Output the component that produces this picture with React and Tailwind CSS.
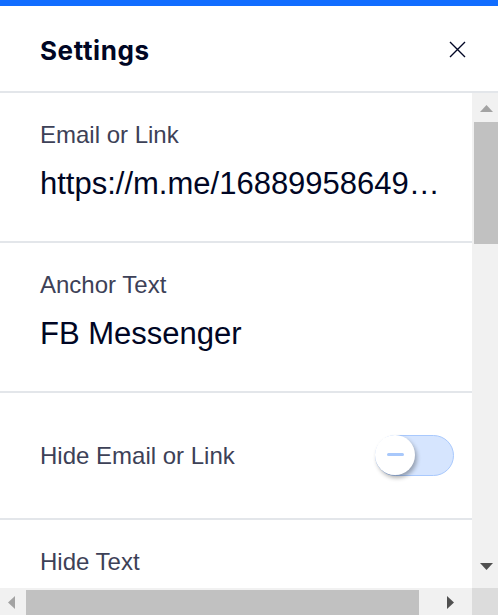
import React from "react";

function Section({ label, value }) {
  return (
    <div className="pl-10 pr-[28px] pt-[27px] pb-[39px] border-b-2 border-[#e3e6ea]">
      <div className="text-[24px] leading-[29px] text-[#3d4157]">{label}</div>
      <div className="mt-4 text-[31px] leading-[37px] text-[#000624] truncate">{value}</div>
    </div>
  );
}

function Toggle() {
  return (
    <div className="relative w-[79px] h-[41px] rounded-full bg-[#d6e5fe] border-[1.5px] border-[#a9c9fd]">
      <div className="absolute left-[-1px] top-[-1.5px] w-[40px] h-[40px] rounded-full bg-white shadow-[2px_3px_4px_rgba(0,0,0,0.3)] flex items-center justify-center">
        <div className="w-[17px] h-[3px] rounded-full bg-[#a8c8fb]" />
      </div>
    </div>
  );
}

export default function App() {
  return (
    <div
      className="w-[498px] h-[615px] flex flex-col bg-white overflow-hidden"
      style={{ fontFamily: '"Liberation Sans", Arial, sans-serif' }}
    >
      <div className="h-[6px] bg-[#116dff] shrink-0" />
      <div className="h-[85px] shrink-0 flex items-center justify-between pl-10 pr-[32px]">
        <div
          className="text-[26px] font-bold text-[#000624] tracking-[0.6px] pt-[3px]"
          style={{ fontFamily: 'Inter, "Noto Sans", sans-serif' }}
        >
          Settings
        </div>
        <svg width="17" height="17" viewBox="0 0 17 17" className="mt-[1px]">
          <path d="M1 1L16 16M16 1L1 16" stroke="#000624" strokeWidth="1.4" />
        </svg>
      </div>
      <div className="h-[2px] bg-[#e3e6ea] shrink-0" />
      <div className="flex-1 flex min-h-0">
        <div className="flex-1 min-w-0 overflow-hidden">
          <Section label="Email or Link" value="https://m.me/168899586491234567" />
          <Section label="Anchor Text" value="FB Messenger" />
          <div className="h-[127px] pl-10 pr-[18px] flex items-center justify-between border-b-2 border-[#e3e6ea]">
            <div className="text-[24px] leading-[29px] text-[#3d4157]">Hide Email or Link</div>
            <Toggle />
          </div>
          <div className="pl-10 pt-[27px]">
            <div className="text-[24px] leading-[29px] text-[#3d4157]">Hide Text</div>
          </div>
        </div>
        <div className="w-[26px] shrink-0 bg-[#f1f1f1] flex flex-col">
          <div className="h-[29px] flex items-center justify-center pl-[2px] pt-[1px]">
            <svg width="13" height="7" viewBox="0 0 13 7"><path d="M6.5 0L13 7H0Z" fill="#a3a3a3" /></svg>
          </div>
          <div className="h-[122px] ml-[2px] bg-[#c1c1c1]" />
          <div className="flex-1" />
          <div className="h-[29px] flex items-start justify-center pl-[2px] pt-[4px]">
            <svg width="13" height="7" viewBox="0 0 13 7"><path d="M0 0H13L6.5 7Z" fill="#505050" /></svg>
          </div>
        </div>
      </div>
      <div className="h-[27px] shrink-0 flex">
        <div className="flex-1 bg-[#f1f1f1] flex items-end">
          <div className="w-[26px] h-[25px] flex items-center justify-center pr-[4px]">
            <svg width="7" height="13" viewBox="0 0 7 13"><path d="M7 0V13L0 6.5Z" fill="#a3a3a3" /></svg>
          </div>
          <div className="w-[393px] h-[25px] bg-[#c1c1c1]" />
          <div className="flex-1 h-[25px] flex items-center justify-center pl-[10px]">
            <svg width="7" height="13" viewBox="0 0 7 13"><path d="M0 0V13L7 6.5Z" fill="#505050" /></svg>
          </div>
        </div>
        <div className="w-[26px] bg-[#dcdcdc]" />
      </div>
    </div>
  );
}
